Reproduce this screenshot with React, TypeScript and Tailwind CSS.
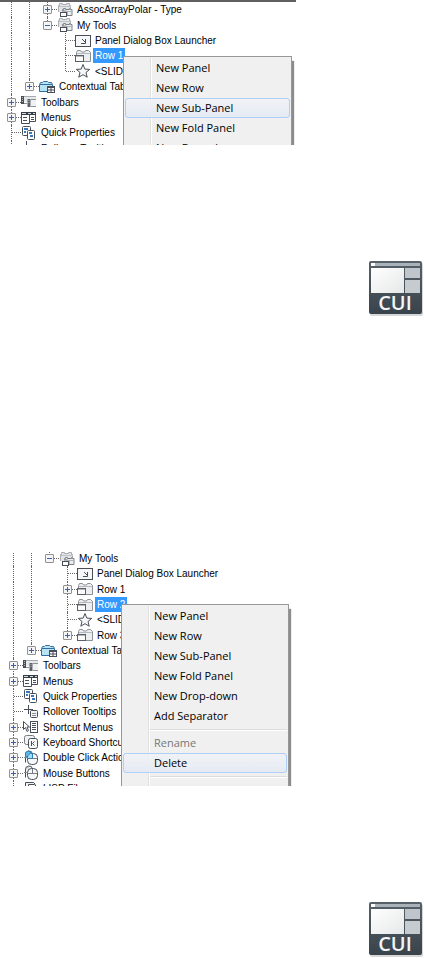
import type { ReactNode } from 'react';

type IconName =
  | 'panels'
  | 'launcher'
  | 'row'
  | 'star'
  | 'tabs'
  | 'toolbars'
  | 'menus'
  | 'properties'
  | 'tooltips'
  | 'shortcut'
  | 'keyboard'
  | 'doubleClick'
  | 'mouse'
  | 'lisp';

interface TreeNode {
  label: string;
  icon: IconName;
  depth: number;
  state?: 'open' | 'closed';
  last?: boolean;
  selected?: boolean;
}

interface MenuEntry {
  label?: string;
  active?: boolean;
  disabled?: boolean;
}

const subPanelTree: TreeNode[] = [
  { label: 'AssocArrayPolar - Type', icon: 'panels', depth: 2, state: 'closed' },
  { label: 'My Tools', icon: 'panels', depth: 2, state: 'open', last: true },
  { label: 'Panel Dialog Box Launcher', icon: 'launcher', depth: 3 },
  { label: 'Row 1', icon: 'row', depth: 3, selected: true },
  { label: '<SLIDEOUT>', icon: 'star', depth: 3, last: true },
  { label: 'Contextual Tabs', icon: 'tabs', depth: 1, state: 'closed', last: true },
  { label: 'Toolbars', icon: 'toolbars', depth: 0, state: 'closed' },
  { label: 'Menus', icon: 'menus', depth: 0, state: 'closed' },
  { label: 'Quick Properties', icon: 'properties', depth: 0 },
  { label: 'Rollover Tooltips', icon: 'tooltips', depth: 0 },
];

const deleteTree: TreeNode[] = [
  { label: 'My Tools', icon: 'panels', depth: 2, state: 'open', last: true },
  { label: 'Panel Dialog Box Launcher', icon: 'launcher', depth: 3 },
  { label: 'Row 1', icon: 'row', depth: 3, state: 'closed' },
  { label: 'Row 2', icon: 'row', depth: 3, selected: true },
  { label: '<SLIDEOUT>', icon: 'star', depth: 3 },
  { label: 'Row 3', icon: 'row', depth: 3, state: 'closed', last: true },
  { label: 'Contextual Tabs', icon: 'tabs', depth: 1, state: 'closed', last: true },
  { label: 'Toolbars', icon: 'toolbars', depth: 0, state: 'closed' },
  { label: 'Menus', icon: 'menus', depth: 0, state: 'closed' },
  { label: 'Quick Properties', icon: 'properties', depth: 0 },
  { label: 'Rollover Tooltips', icon: 'tooltips', depth: 0 },
  { label: 'Shortcut Menus', icon: 'shortcut', depth: 0, state: 'closed' },
  { label: 'Keyboard Shortcuts', icon: 'keyboard', depth: 0, state: 'closed' },
  { label: 'Double Click Actions', icon: 'doubleClick', depth: 0, state: 'closed' },
  { label: 'Mouse Buttons', icon: 'mouse', depth: 0, state: 'closed' },
  { label: 'LISP Files', icon: 'lisp', depth: 0 },
];

const subPanelMenu: MenuEntry[] = [
  { label: 'New Panel' },
  { label: 'New Row' },
  { label: 'New Sub-Panel', active: true },
  { label: 'New Fold Panel' },
  { label: 'New Drop-down' },
];

const deleteMenu: MenuEntry[] = [
  { label: 'New Panel' },
  { label: 'New Row' },
  { label: 'New Sub-Panel' },
  { label: 'New Fold Panel' },
  { label: 'New Drop-down' },
  { label: 'Add Separator' },
  {},
  { label: 'Rename', disabled: true },
  { label: 'Delete', active: true },
  {},
  { label: 'Duplicate', disabled: true },
];

const mouseBody = (
  <>
    <path d="M2.5 12.5V5a3.500 3.500 0 0 1 7-1" fill="#f4f5f7" />
    <path d="M1 7.500h3M5 1.500v2" stroke="#8b9097" />
    <rect x="4.500" y="3.500" width="10" height="11" rx="4" fill="#f6f7f8" />
    <path d="M4.500 8.500h10M9.500 4v4" stroke="#777c83" />
  </>
);

const icons: Record<IconName, ReactNode> = {
  panels: (
    <>
      <path d="M1 10V4h1V2h4v1h3V2h4v2h1v6z" fill="#e2e4e6" stroke="none" />
      <path d="M1.500 10V3.500h1v-2h3v1h4v-1h3v2h1V6" stroke="#a9adb2" />
      <path d="M2 4.500h12" stroke="#bfc2c6" />
      <path d="M5.500 8.500v-1h1v-1h2v1h4v-1h1v1h1.500v6H10v-4z" fill="#eceeef" stroke="#7b8087" />
      <path d="M5 9.500h10" stroke="#aeb2b7" />
      <rect x="3.500" y="10.500" width="6" height="4" fill="#fff" />
    </>
  ),
  launcher: (
    <>
      <rect x=".5" y="2.500" width="15" height="11" fill="#f6f7f8" />
      <path d="M7 6l3 3" />
      <path d="M10.500 6v4.500H6" fill="none" />
    </>
  ),
  row: (
    <>
      <path d="M1.500 7.500v-3l1-2h3l1 1.500h3l1-1.500h3l2 2v9h-7v-6z" fill="#eceeef" stroke="#8b9097" />
      <path d="M2 5.500h13" stroke="#b6b9be" />
      <rect x=".5" y="7.500" width="8" height="6" fill="#fafafb" stroke="#5a6069" />
      <path d="M1 8.500h7" stroke="#b6b9be" />
    </>
  ),
  star: (
    <path
      d="M8 1.500l1.900 4.600 4.800.3-3.700 3.100 1.200 4.700L8 11.700l-4.200 2.500L5 9.500 1.300 6.400l4.800-.3z"
      fill="#f6f7f8"
    />
  ),
  tabs: (
    <>
      <path d="M.5 12.500V5.500l1-2h2l1-1h4l1 1h3l1 2v7z" fill="#b9e2f4" stroke="#2f6f9c" />
      <path d="M1 5.500h12" stroke="#2f6f9c" />
      <rect x="8.500" y="7.500" width="7" height="6" fill="#fff" />
      <path d="M8 8.500h8M8 11h8M12 8v6" />
    </>
  ),
  toolbars: (
    <>
      <path d="M3 3h12v5H3z" fill="#e6e8ea" stroke="none" />
      <path d="M3 2.500h12" stroke="#a7abb0" />
      <path d="M1.500 2v8" strokeWidth="3" />
      <path d="M1.500 3v1M1.500 5v1M1.500 7v1" stroke="#b6bac0" />
      <path d="M3 9.500h3" stroke="#8b9097" />
      <path d="M8 5v8" strokeWidth="3" stroke="#5a6069" />
      <path d="M8 6v1M8 8v1" stroke="#b6bac0" />
      <path d="M10 6h5v7h-5z" fill="#f0f1f2" stroke="none" />
      <path d="M10 5.500h5M10 12.500h5" stroke="#8b9097" />
    </>
  ),
  menus: (
    <>
      <path d="M.5 4v9.500h8V4M8.500 11.500h6V4" fill="#fff" />
      <rect x="0" y="2" width="15" height="3" fill="#373d47" stroke="none" />
      <path d="M1 3.500h4M7 3.500h3M12 3.500h2" stroke="#d6d9dd" />
      <path d="M2 7.500h4M2 10.500h4M10 7.500h3M10 9.500h3" />
    </>
  ),
  properties: (
    <>
      <rect x="1.500" y="1.500" width="8" height="9" rx="1" fill="#fff" />
      <path d="M3 4h4M3 7h2" stroke="#3777bd" strokeWidth="2" />
      <rect x="6.500" y="5.500" width="7" height="9" rx="1" fill="#fff" />
      <path d="M8 8h3M9 11h3" stroke="#3777bd" strokeWidth="2" />
    </>
  ),
  tooltips: (
    <>
      <path d="M1 5.500h9M5.500 1v9" />
      <rect x="7.500" y="6.500" width="7" height="7" rx="1" fill="#f1f2f4" />
      <path d="M9 9.500h4M9 11.500h4" stroke="#8b9097" />
    </>
  ),
  shortcut: (
    <>
      <path d="M.5 2.500v8l2-2 1.500 4 1.500-1-1.500-3.500h2.500z" fill="#fff" />
      <rect x="7.500" y="2.500" width="7" height="11" fill="#fff" />
      <path d="M9 4.500h4M9 6.500h4M9 8.500h4M9 10.500h4" />
    </>
  ),
  keyboard: (
    <>
      <rect x="1.500" y="1.500" width="10" height="9" rx="2" fill="#f1f2f4" stroke="#777c83" />
      <rect x="5.500" y="4.500" width="9" height="10" rx="2" fill="#f6f7f8" />
      <path d="M8.500 7v5M11.500 7.500l-2 2 2 2" />
    </>
  ),
  doubleClick: (
    <>
      {mouseBody}
      <path d="M2.500 7V5a3 3 0 0 1 5-3l1 1.500-3 3z" fill="#5db9ea" stroke="#2b7fb9" />
      <path d="M4.500 8.500V7.500a4 4 0 0 1 5-4v5z" fill="#a5dcf6" stroke="#2b7fb9" />
    </>
  ),
  mouse: mouseBody,
  lisp: (
    <>
      <path d="M2.500 11V2.500h8l2 2" fill="#f1f2f4" />
      <path d="M5.500 14.500v-10h6l3 3v7z" fill="#fff" />
      <path d="M7 8.500h5" />
    </>
  ),
};

function TreeIcon({ name }: { name: IconName }) {
  return (
    <svg viewBox="0 0 16 16" className="size-4 shrink-0" fill="none" stroke="#484e58" aria-hidden="true">
      {icons[name]}
    </svg>
  );
}

function Guide({ visible }: { visible: boolean }) {
  return (
    <span className="flex w-[18px] shrink-0 self-stretch">
      {visible && <span className="w-[9px] border-r border-dotted border-[#666]" />}
    </span>
  );
}

function TreeRow({ node }: { node: TreeNode }) {
  const { label, icon, depth, state, last, selected } = node;
  return (
    <li className="flex min-h-0 flex-1 items-center whitespace-nowrap">
      {Array.from({ length: depth }, (_, level) => (
        <Guide key={level} visible={level < 2} />
      ))}
      <span className="relative flex w-[18px] shrink-0 items-center self-stretch">
        <span
          className={`w-[9px] self-start border-r border-dotted border-[#666] ${last ? 'h-1/2' : 'h-full'}`}
        />
        <span className="w-[9px] border-t border-dotted border-[#666]" />
        {state && (
          <button
            type="button"
            aria-label={`${state === 'open' ? 'Collapse' : 'Expand'} ${label}`}
            aria-expanded={state === 'open'}
            className="absolute inset-y-0 left-1 my-auto size-[9px] rounded-[1px] border border-[#919191] bg-[#f5f5f5]"
          >
            <svg viewBox="0 0 7 7" className="size-[7px]" stroke="#3c5fae" aria-hidden="true">
              <path d={state === 'open' ? 'M1 3.500h5' : 'M1 3.500h5M3.500 1v5'} />
            </svg>
          </button>
        )}
      </span>
      <TreeIcon name={icon} />
      <span
        className={`ml-[2px] px-[2px] text-[10px] leading-[15px] ${selected ? 'bg-[#3399ff] text-white' : ''}`}
      >
        {label}
      </span>
    </li>
  );
}

function ContextMenu({ entries }: { entries: MenuEntry[] }) {
  return (
    <div
      role="menu"
      className="border border-[#979797] bg-[#f0f0f0] p-px font-['Open_Sans','Noto_Sans',sans-serif] text-[11px] shadow-[3px_4px_1px_-1px_#8c8c8c]"
    >
      <div className="bg-[linear-gradient(90deg,transparent_25px,#e0e0e0_25px,#e0e0e0_26px,#fff_26px,#fff_27px,transparent_27px)]">
        {entries.map((entry, i) =>
          entry.label ? (
            <button
              key={entry.label}
              type="button"
              role="menuitem"
              disabled={entry.disabled}
              className={`flex h-5 w-full items-center rounded-[3px] border pl-[30px] text-left whitespace-nowrap ${
                entry.active
                  ? 'border-[#aecff7] bg-linear-to-b from-[#f0f2f6]/90 to-[#e4eaf4]/90'
                  : 'border-transparent'
              } ${entry.disabled ? 'text-[#777]' : 'text-black'}`}
            >
              {entry.label}
            </button>
          ) : (
            <div key={i} role="separator" className="ml-[27px] flex h-[7px] items-center">
              <span className="h-[2px] w-full border-t border-[#dcdcdc] bg-white" />
            </div>
          ),
        )}
      </div>
    </div>
  );
}

function CuiBadge() {
  return (
    <svg viewBox="0 0 54 56" className="mr-px h-14 w-[54px] self-end" role="img" aria-label="CUI">
      <defs>
        <linearGradient id="cui-frame" x1="0" y1="0" x2="0" y2="1">
          <stop offset="0" stopColor="#56616a" />
          <stop offset="1" stopColor="#39434c" />
        </linearGradient>
        <linearGradient id="cui-pane" x1="0" y1="0" x2="1" y2="1">
          <stop offset="0" stopColor="#ffffff" />
          <stop offset="1" stopColor="#e6e7e8" />
        </linearGradient>
      </defs>
      <rect x="1" y="2" width="53" height="53" rx="2" fill="#b9bdc0" opacity=".6" />
      <rect x="0" y="0" width="53" height="53" rx="2" fill="url(#cui-frame)" />
      <rect x="2" y="2" width="49" height="3" fill="#aab2b9" />
      <rect x="2" y="2" width="4" height="3" fill="#fff" />
      <rect x="2" y="7" width="33" height="25" fill="url(#cui-pane)" />
      <rect x="36" y="7" width="15" height="10" fill="#bfc5cb" />
      <rect x="36" y="19" width="15" height="13" fill="#c6cbd0" />
      <text
        x="26"
        y="49"
        textAnchor="middle"
        fill="#f4f5f6"
        className="font-['Open_Sans',sans-serif] text-[20px] font-semibold"
      >
        CUI
      </text>
    </svg>
  );
}

export default function App() {
  return (
    <main className="flex flex-col bg-white font-['Liberation_Sans',sans-serif] text-black">
      <section className="relative h-[145px] max-w-[296px] overflow-hidden border-t-2 border-[#606060]">
        <ul className="flex h-[154px] flex-col pl-[3px]">
          {subPanelTree.map((node) => (
            <TreeRow key={node.label} node={node} />
          ))}
        </ul>
        <div className="absolute top-[54px] left-[123px] w-[169px]">
          <ContextMenu entries={subPanelMenu} />
        </div>
      </section>

      <div className="flex flex-col pt-[116px]">
        <CuiBadge />
      </div>

      <section className="relative mt-[235px] h-[234px] max-w-[296px] overflow-hidden">
        <ul className="-mt-px flex h-[245px] flex-col pl-[5px]">
          {deleteTree.map((node) => (
            <TreeRow key={node.label} node={node} />
          ))}
        </ul>
        <div className="absolute top-[52px] left-[121px] w-[168px]">
          <ContextMenu entries={deleteMenu} />
        </div>
      </section>

      <div className="flex flex-col pt-[116px]">
        <CuiBadge />
      </div>
    </main>
  );
}
